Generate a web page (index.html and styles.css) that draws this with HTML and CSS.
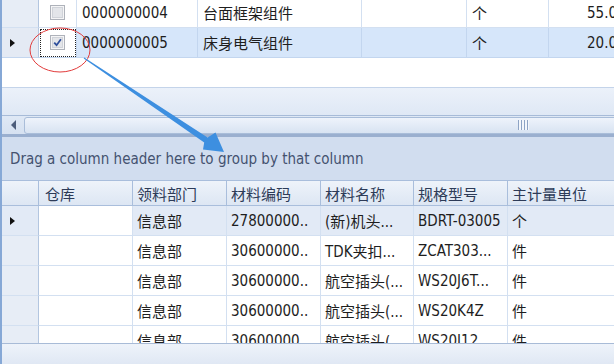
FILE: index.html
```html
<!DOCTYPE html>
<html lang="zh-CN">
<head>
    <meta charset="UTF-8">
    <meta name="viewport" content="width=device-width, initial-scale=1.0">
    <title>Grid</title>
    <link rel="stylesheet" href="styles.css">
</head>
<body>
    <div class="grid-view">
        <!-- master grid (scrolled to the last rows) -->
        <div class="master">
            <div class="master-rows">
                <div class="row mrow">
                    <div class="cell ind"></div>
                    <div class="cell chk">
                        <svg width="15" height="15" viewBox="0 0 15 15">
                            <rect x="0.5" y="0.5" width="14" height="14" fill="#f5f5f6" stroke="#aeb2ba"/>
                            <rect x="2.5" y="2.5" width="10" height="10" fill="#e3e5e9" stroke="#d0d3d9"/>
                        </svg>
                    </div>
                    <div class="cell">0000000004</div>
                    <div class="cell">台面框架组件</div>
                    <div class="cell"></div>
                    <div class="cell">个</div>
                    <div class="cell qty">55.00</div>
                </div>
                <div class="row mrow selected">
                    <div class="cell ind"><span class="indicator"></span></div>
                    <div class="cell chk focused">
                        <svg width="15" height="15" viewBox="0 0 15 15">
                            <rect x="0.5" y="0.5" width="14" height="14" fill="#f5f5f6" stroke="#aeb2ba"/>
                            <rect x="2.5" y="2.5" width="10" height="10" fill="#e3e5e9" stroke="#d0d3d9"/>
                            <path d="M4.2 7.6 L6.6 10.2 L10.9 4.2" fill="none" stroke="#2f4f9c" stroke-width="1.8"/>
                        </svg>
                    </div>
                    <div class="cell">0000000005</div>
                    <div class="cell">床身电气组件</div>
                    <div class="cell"></div>
                    <div class="cell">个</div>
                    <div class="cell qty">20.00</div>
                </div>
            </div>
        </div>
        <div class="footer-band"></div>
        <div class="hscroll">
            <div class="scroll-btn"><span class="scroll-left"></span></div>
            <div class="thumb"><span class="grip"></span></div>
        </div>

        <div class="group-panel">Drag a column header here to group by that column</div>

        <!-- detail grid -->
        <div class="detail">
            <div class="row drow header">
                <div class="cell ind"></div>
                <div class="cell">仓库</div>
                <div class="cell">领料部门</div>
                <div class="cell">材料编码</div>
                <div class="cell">材料名称</div>
                <div class="cell">规格型号</div>
                <div class="cell">主计量单位</div>
            </div>
            <div class="row drow focused-row">
                <div class="cell ind"><span class="indicator"></span></div>
                <div class="cell focus-cell"></div>
                <div class="cell">信息部</div>
                <div class="cell">27800000..</div>
                <div class="cell">(新)机头...</div>
                <div class="cell">BDRT-03005</div>
                <div class="cell">个</div>
            </div>
            <div class="row drow">
                <div class="cell ind"></div>
                <div class="cell"></div>
                <div class="cell">信息部</div>
                <div class="cell">30600000..</div>
                <div class="cell">TDK夹扣...</div>
                <div class="cell">ZCAT303...</div>
                <div class="cell">件</div>
            </div>
            <div class="row drow">
                <div class="cell ind"></div>
                <div class="cell"></div>
                <div class="cell">信息部</div>
                <div class="cell">30600000..</div>
                <div class="cell">航空插头(...</div>
                <div class="cell">WS20J6T...</div>
                <div class="cell">件</div>
            </div>
            <div class="row drow">
                <div class="cell ind"></div>
                <div class="cell"></div>
                <div class="cell">信息部</div>
                <div class="cell">30600000..</div>
                <div class="cell">航空插头(...</div>
                <div class="cell">WS20K4Z</div>
                <div class="cell">件</div>
            </div>
            <div class="row drow">
                <div class="cell ind"></div>
                <div class="cell"></div>
                <div class="cell">信息部</div>
                <div class="cell">30600000..</div>
                <div class="cell">航空插头(...</div>
                <div class="cell">WS20J12</div>
                <div class="cell">件</div>
            </div>
        </div>
        <div class="status-band"></div>

        <!-- hand-drawn annotation on top of the screenshot -->
        <svg class="annotation" width="614" height="364" viewBox="0 0 614 364">
            <ellipse cx="60" cy="50" rx="30" ry="22" fill="none" stroke="#e23b3b" stroke-width="1"/>
            <polygon points="83.7,58.4 84.3,57.6 207.6,137.4 215.5,132.5 224,152 203,149.5 204.2,142.6" fill="#3d8fe0"/>
        </svg>
    </div>
</body>
</html>
```

FILE: styles.css
```css
body {
    margin: 0;
    background-color: #fff;
    font-family: "DejaVu Sans Condensed", "DejaVu Sans", "Noto Sans CJK SC", sans-serif;
    font-stretch: condensed;
    font-size: 15px;
    color: #1e1e1e;
}
.grid-view {
    position: relative;
    width: 614px;
    height: 364px;
    overflow: hidden;
    border-left: 2px solid #86a8d6;
    box-sizing: border-box;
}
.row {
    display: grid;
    height: 30px;
}
.cell {
    box-sizing: border-box;
    display: flex;
    align-items: center;
    padding-left: 5px;
    white-space: nowrap;
    overflow: hidden;
    border-right: 1px solid #d3e0f1;
    border-bottom: 1px solid #d3e0f1;
}
.cell.ind {
    padding-left: 8px;
    background-color: #e7edf6;
    border-right-color: #b3c6e0;
}
.indicator {
    width: 0;
    height: 0;
    border-left: 5px solid #111;
    border-top: 4px solid transparent;
    border-bottom: 4px solid transparent;
}

/* master grid */
.master {
    height: 87px;
    overflow: hidden;
}
.master-rows {
    margin-top: -2px;
}
.mrow {
    grid-template-columns: 37px 38px 121px 164px 105px 82px 120px;
}
.cell.chk {
    justify-content: center;
    padding-left: 0;
}
.cell.qty {
    padding-left: 38px;
}
.mrow.selected .cell {
    background-color: #d6e6fa;
    border-color: #c3d6ef;
}
.mrow.selected .cell.ind {
    background-color: #e4eaf4;
    border-right-color: #b3c6e0;
}
.mrow.selected .cell.chk.focused {
    background-color: #fff;
    outline: 1px dotted #222;
    outline-offset: -2px;
}

.footer-band {
    height: 28px;
    border-top: 1px solid #c4d4ea;
    box-sizing: border-box;
    background: linear-gradient(#ebf1fa, #dfe8f5);
}
.hscroll {
    display: flex;
    align-items: center;
    height: 22px;
    border-top: 1px solid #a7bbd8;
    border-bottom: 3px solid #9aafcf;
    box-sizing: border-box;
    background: linear-gradient(#dfe8f5, #d6e1f1);
    overflow: hidden;
}
.scroll-btn {
    width: 22px;
    display: flex;
    justify-content: center;
    flex-shrink: 0;
}
.scroll-left {
    width: 0;
    height: 0;
    border-right: 5px solid #4d5d7b;
    border-top: 5px solid transparent;
    border-bottom: 5px solid transparent;
}
.thumb {
    flex-shrink: 0;
    width: 998px;
    height: 17px;
    display: flex;
    align-items: center;
    justify-content: center;
    border: 1px solid #a9bdd9;
    border-radius: 3px;
    box-sizing: border-box;
    background: linear-gradient(#eef3fb, #d8e3f2);
}
.grip {
    width: 11px;
    height: 10px;
    background: repeating-linear-gradient(90deg, #8ea4c5 0 1px, #f4f7fc 1px 3px);
}

.group-panel {
    height: 43px;
    display: flex;
    align-items: center;
    padding-left: 8px;
    background-color: #d1ddef;
    color: #44526f;
}

/* detail grid */
.detail {
    height: 163px;
    overflow: hidden;
}
.drow {
    grid-template-columns: 37px 94px 94px 94px 93px 94px 120px;
}
.drow .cell {
    padding-left: 4px;
}
.drow .cell.ind {
    padding-left: 8px;
}
.drow.header {
    height: 26px;
    background: linear-gradient(#eef3fa, #dce6f3);
    border-top: 1px solid #a9bedc;
    box-sizing: border-box;
    color: #2d3b58;
}
.drow.header .cell {
    border-color: #a9bedc;
    background: transparent;
}
.drow.header .cell:nth-child(2) {
    padding-left: 6px;
}
.focused-row .cell {
    background-color: #e2eaf6;
}
.focused-row .cell.focus-cell {
    background-color: #fff;
}

.status-band {
    height: 21px;
    border-top: 1px solid #a8bbd7;
    box-sizing: border-box;
    background: linear-gradient(#eef3fa, #e0e8f4);
}

.annotation {
    position: absolute;
    left: -2px;
    top: 0;
    pointer-events: none;
}
```
